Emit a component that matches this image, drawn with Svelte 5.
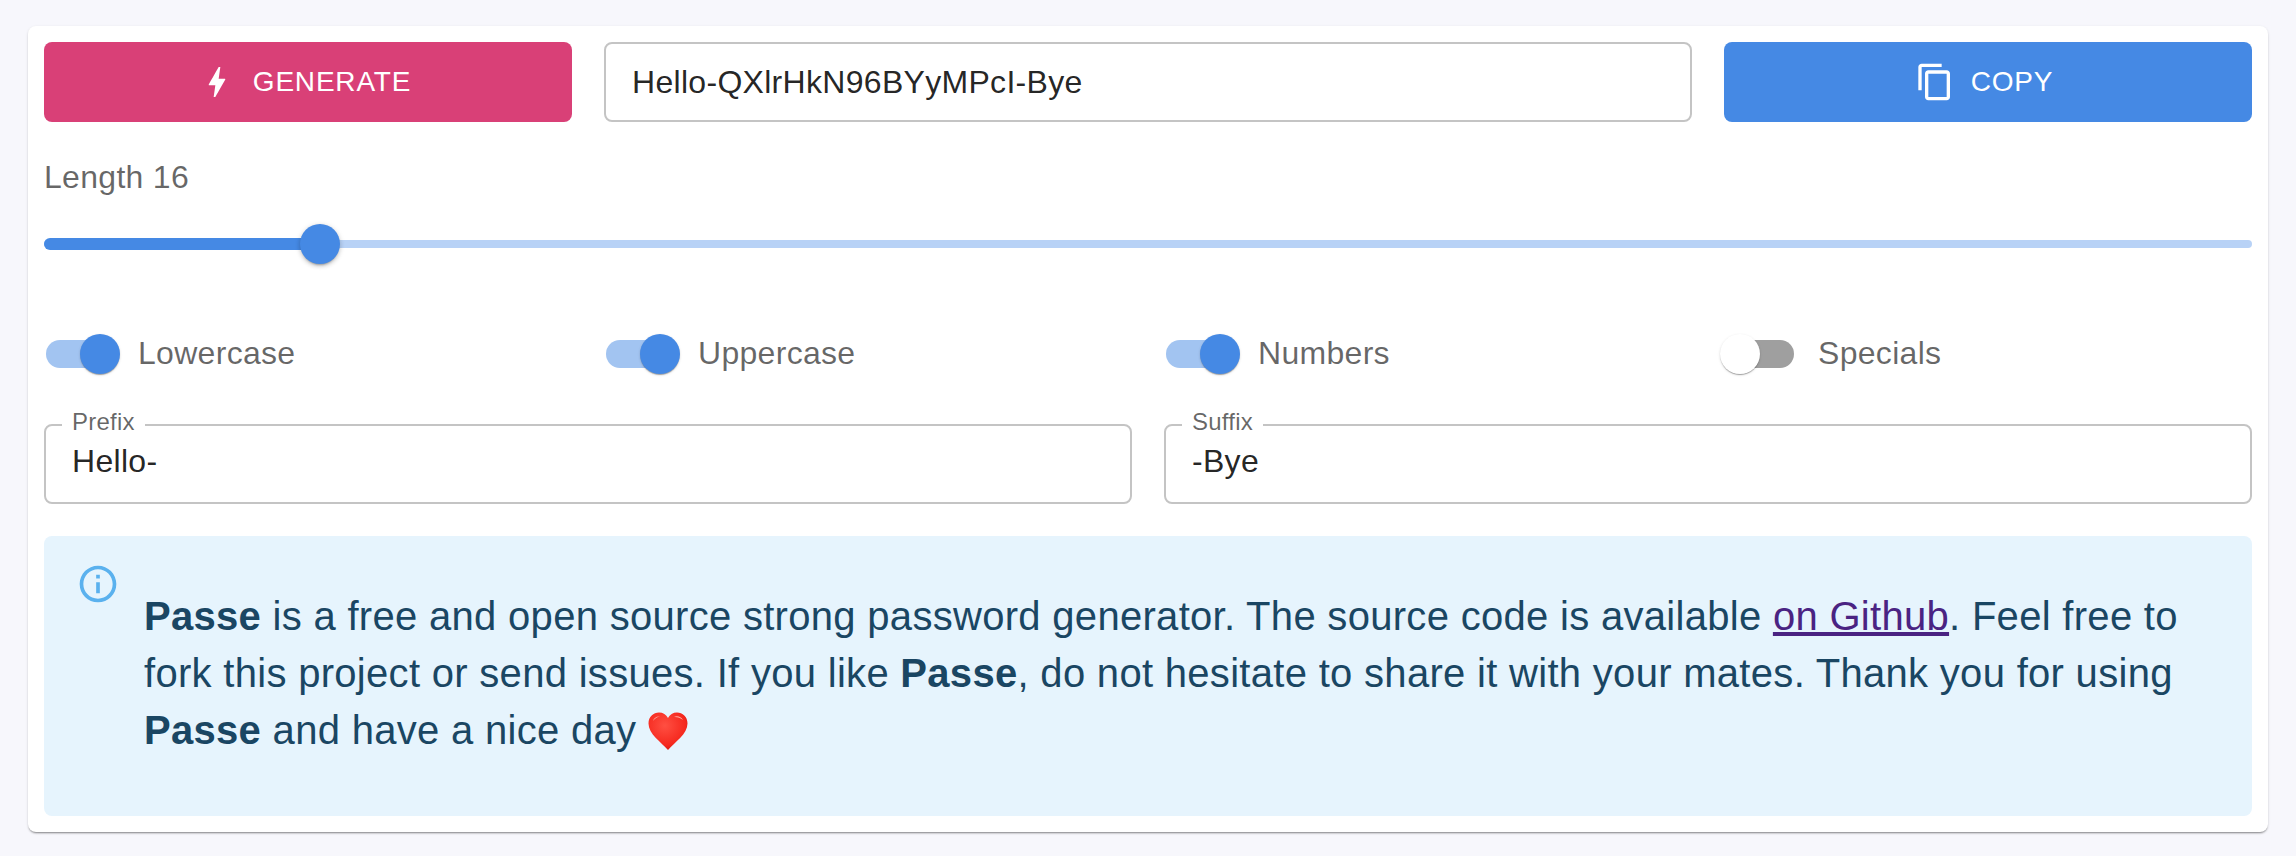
<script>
  let length = 16;
  const toggles = [
    { label: "Lowercase", on: true },
    { label: "Uppercase", on: true },
    { label: "Numbers", on: true },
    { label: "Specials", on: false },
  ];
</script>

<main class="page">
  <section class="card">
    <div class="top-row">
      <button class="btn pink">
        <svg class="btn-icon" viewBox="0 0 24 24"><path d="M11 21h-1l1-7H7.500c-.58 0-.57-.32-.38-.66.19-.34.05-.08.07-.12C8.480 10.940 10.420 7.540 13 3h1l-1 7h3.500c.49 0 .56.33.47.51l-.07.15C12.960 17.550 11 21 11 21z" /></svg>
        Generate
      </button>
      <div class="field"><input value="Hello-QXlrHkN96BYyMPcI-Bye" /></div>
      <button class="btn blue">
        <svg class="btn-icon" viewBox="0 0 24 24"><path d="M16 1H4c-1.100 0-2 .9-2 2v14h2V3h12V1zm3 4H8c-1.100 0-2 .9-2 2v14c0 1.100.9 2 2 2h11c1.100 0 2-.9 2-2V7c0-1.100-.9-2-2-2zm0 16H8V7h11v14z" /></svg>
        Copy
      </button>
    </div>

    <div class="length">Length {length}</div>
    <div class="slider">
      <span class="rail"></span>
      <span class="track" style="width: 12.5%"></span>
      <span class="thumb" style="left: 12.5%"></span>
    </div>

    <div class="toggles">
      {#each toggles as t}
        <label class="toggle">
          <span class="switch" class:on={t.on}><span class="knob"></span></span>
          <span class="toggle-text">{t.label}</span>
        </label>
      {/each}
    </div>

    <div class="affix-row">
      <div class="field affix">
        <span class="float">Prefix</span>
        <input value="Hello-" />
      </div>
      <div class="field affix">
        <span class="float">Suffix</span>
        <input value="-Bye" />
      </div>
    </div>

    <div class="alert">
      <svg class="alert-icon" viewBox="0 0 24 24"><path d="M11 7h2v2h-2zm0 4h2v6h-2zm1-9C6.480 2 2 6.480 2 12s4.480 10 10 10 10-4.480 10-10S17.520 2 12 2zm0 18c-4.410 0-8-3.590-8-8s3.590-8 8-8 8 3.590 8 8-3.590 8-8 8z" /></svg>
      <p>
        <b>Passe</b> is a free and open source strong password generator. The source code is available <a href="#github">on Github</a>. Feel free to fork this project or send issues. If you like <b>Passe</b>, do not hesitate to share it with your mates. Thank you for using <b>Passe</b> and have a nice day
        <svg class="heart" viewBox="0 0 40 38">
          <defs>
            <radialGradient id="heartfill" cx="0.42" cy="0.35" r="0.75">
              <stop offset="0" stop-color="#ff4f42" />
              <stop offset="0.7" stop-color="#f5281e" />
              <stop offset="1" stop-color="#c9100c" />
            </radialGradient>
          </defs>
          <path d="M20 38C13 30 0.500 22 0.500 11.500 0.500 4.500 5.500 0.500 11 0.500c4 0 7.300 2 9 5.600 1.700-3.600 5-5.600 9-5.600 5.500 0 10.500 4 10.500 11 0 10.500-12.500 18.500-19.500 26.500z" fill="url(#heartfill)" />
          <path d="M5 9c1-3.500 4-5 7-4.500-3 .5-5 2-7 4.500zM26 5c3-1.500 7-.5 9 3-2.500-2-5.500-3.200-9-3z" fill="#ffb3a8" />
        </svg>
      </p>
    </div>
  </section>
</main>

<style>
  :global(body) {
    background: #f7f7fc;
    font-family: "Liberation Sans", Arial, sans-serif;
  }

  .page {
    padding: 26px 28px;
  }

  .card {
    background: #fff;
    border-radius: 8px;
    padding: 16px;
    box-shadow: 0 2px 2px -1px rgba(0, 0, 0, 0.4), 0 1px 3px 0 rgba(0, 0, 0, 0.12);
  }

  .top-row {
    display: grid;
    grid-template-columns: 528px 1088px 528px;
    gap: 32px;
  }

  .btn {
    height: 80px;
    border: none;
    border-radius: 8px;
    color: #fff;
    font: 400 28px/1 "Liberation Sans", Arial, sans-serif;
    letter-spacing: 0.02857em;
    text-transform: uppercase;
    display: flex;
    align-items: center;
    justify-content: center;
    gap: 16px;
  }

  .pink {
    background: #d94077;
  }

  .blue {
    background: #4589e4;
  }

  .btn-icon {
    width: 40px;
    height: 40px;
    fill: #fff;
    margin-left: -8px;
  }

  .field {
    position: relative;
    height: 80px;
    box-sizing: border-box;
    border: 2px solid #c4c4c4;
    border-radius: 8px;
  }

  .field input {
    width: 100%;
    height: 100%;
    box-sizing: border-box;
    border: none;
    outline: none;
    background: none;
    padding: 0 26px;
    font: 400 32px "Liberation Sans", Arial, sans-serif;
    letter-spacing: 0.00938em;
    color: rgba(0, 0, 0, 0.87);
  }

  .affix input {
    padding-bottom: 6px;
  }

  .float {
    position: absolute;
    left: 16px;
    top: -18px;
    padding: 0 10px;
    background: #fff;
    font-size: 24px;
    line-height: 28px;
    color: rgba(0, 0, 0, 0.6);
    letter-spacing: 0.00938em;
  }

  .length {
    margin-top: 31px;
    font-size: 32px;
    line-height: 48px;
    letter-spacing: 0.00938em;
    color: rgba(0, 0, 0, 0.6);
  }

  .slider {
    position: relative;
    height: 40px;
    margin-top: 23px;
  }

  .rail {
    position: absolute;
    left: 0;
    right: 0;
    top: 16px;
    height: 8px;
    border-radius: 4px;
    background: #b8d2f6;
  }

  .track {
    position: absolute;
    left: 0;
    top: 14px;
    height: 12px;
    border-radius: 6px 0 0 6px;
    background: #4589e4;
  }

  .thumb {
    position: absolute;
    top: 0;
    width: 40px;
    height: 40px;
    margin-left: -20px;
    border-radius: 50%;
    background: #4589e4;
    box-shadow: 0 3px 2px -2px rgba(0, 0, 0, 0.25), 0 2px 4px 0 rgba(0, 0, 0, 0.16), 0 1px 6px 0 rgba(0, 0, 0, 0.1);
  }

  .toggles {
    display: grid;
    grid-template-columns: repeat(4, 528px);
    gap: 32px;
    margin-top: 70px;
  }

  .toggle {
    display: flex;
    align-items: center;
    height: 40px;
    padding-left: 2px;
    gap: 24px;
    font-size: 32px;
    letter-spacing: 0.00938em;
    color: rgba(0, 0, 0, 0.6);
  }

  .toggle-text {
    margin-top: -2px;
  }

  .switch {
    position: relative;
    width: 68px;
    height: 28px;
    border-radius: 14px;
    background: #9f9f9f;
  }

  .switch.on {
    background: #a2c4f1;
  }

  .knob {
    position: absolute;
    top: -6px;
    left: -6px;
    width: 40px;
    height: 40px;
    border-radius: 50%;
    background: #fff;
    box-shadow: 0 2px 1px -1px rgba(0, 0, 0, 0.2), 0 1px 1px 0 rgba(0, 0, 0, 0.14), 0 1px 3px 0 rgba(0, 0, 0, 0.12);
  }

  .switch.on .knob {
    left: 34px;
    background: #4589e4;
  }

  .affix-row {
    display: grid;
    grid-template-columns: 1088px 1088px;
    gap: 32px;
    margin-top: 50px;
  }

  .alert {
    display: flex;
    margin-top: 32px;
    padding: 26px 32px 0;
    height: 280px;
    box-sizing: border-box;
    border-radius: 8px;
    background: #e6f4fd;
    color: #1a4663;
  }

  .alert-icon {
    flex: none;
    width: 44px;
    height: 44px;
    fill: #5ab1ee;
    margin-right: 24px;
  }

  .alert p {
    margin: 26px 0 0;
    font-size: 40px;
    line-height: 57.2px;
    letter-spacing: 0.3px;
  }

  .alert a {
    color: #4a2382;
  }

  .heart {
    width: 40px;
    height: 38px;
    vertical-align: -6px;
  }
</style>
